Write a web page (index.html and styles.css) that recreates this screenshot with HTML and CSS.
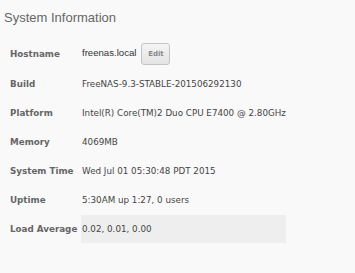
FILE: index.html
```html
<!DOCTYPE html>
<html>
<head>
<meta charset="utf-8">
<link rel="stylesheet" href="styles.css">
</head>
<body>
<div class="panel">
  <h1 class="title">System Information</h1>
  <table class="info">
    <tr class="host-row">
      <th>Hostname</th>
      <td><span class="host">freenas.local</span><button class="edit">Edit</button></td>
    </tr>
    <tr><th>Build</th><td>FreeNAS-9.3-STABLE-201506292130</td></tr>
    <tr><th>Platform</th><td>Intel(R) Core(TM)2 Duo CPU E7400 @ 2.80GHz</td></tr>
    <tr><th>Memory</th><td>4069MB</td></tr>
    <tr><th>System Time</th><td>Wed Jul 01 05:30:48 PDT 2015</td></tr>
    <tr><th>Uptime</th><td>5:30AM up 1:27, 0 users</td></tr>
    <tr><th>Load Average</th><td class="load">0.02, 0.01, 0.00</td></tr>
  </table>
</div>
</body>
</html>
```
FILE: styles.css
```css
html, body {
  margin: 0;
  padding: 0;
  background: #f9f9f9;
}
.panel {
  padding: 9px 4px 0 4px;
}
.title {
  margin: 0;
  font-family: "Liberation Sans", Arial, sans-serif;
  font-weight: normal;
  font-size: 13px;
  color: #666;
  line-height: 17px;
}
.info {
  margin-top: 11px;
  border-collapse: separate;
  border-spacing: 0 1.5px;
}
.info th, .info td {
  font-family: "DejaVu Sans", Verdana, sans-serif;
  font-size: 8.75px;
  height: 28px;
  text-align: left;
  vertical-align: middle;
  white-space: nowrap;
}
.info th {
  box-sizing: border-box;
  width: 77px;
  padding: 0 0 0 6px;
  color: #666;
  font-weight: bold;
}
.info td {
  width: 204px;
  color: #444;
  padding: 0 0 0 1px;
}
.host-row td {
  height: 31px;
}
.host {
  font-family: "Liberation Sans", Arial, sans-serif;
  font-size: 9.6px;
  color: #333;
  margin-right: 5px;
}
.edit {
  font-family: "DejaVu Sans", Verdana, sans-serif;
  font-size: 7px;
  font-weight: bold;
  color: #888;
  width: 29px;
  height: 22px;
  padding: 0;
  border: 1px solid #c4c4c4;
  border-radius: 3px;
  background: linear-gradient(#f4f4f4, #e4e4e4);
  vertical-align: middle;
}
.load {
  background: #eeeeee;
}
```
